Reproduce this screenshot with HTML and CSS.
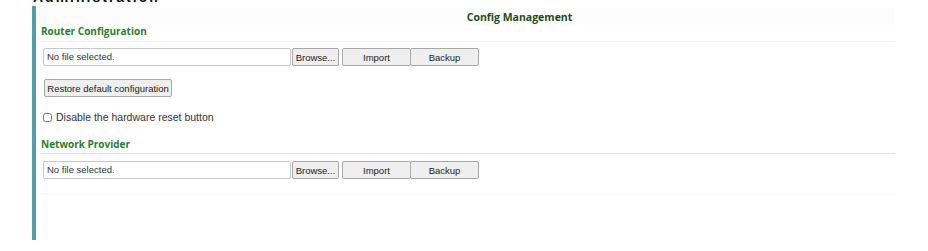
FILE: index.html
```html
<!DOCTYPE html>
<html lang="en">
<head>
  <meta charset="UTF-8">
  <title>Config Management</title>
  <link rel="stylesheet" href="styles.css">
</head>
<body>
  <div class="top-title"><span>Administration</span></div>
  <div class="panel">
    <div class="panel-head">Config Management</div>
    <div class="panel-body">
      <h3 class="section">Router Configuration</h3>
      <div class="file-row">
        <div class="file-box">No file selected.</div>
        <button class="btn browse">Browse...</button>
        <button class="btn action">Import</button>
        <button class="btn action">Backup</button>
      </div>
      <button class="btn restore">Restore default configuration</button>
      <label class="check">
        <input type="checkbox">
        <span>Disable the hardware reset button</span>
      </label>

      <h3 class="section ruled">Network Provider</h3>
      <div class="file-row">
        <div class="file-box">No file selected.</div>
        <button class="btn browse">Browse...</button>
        <button class="btn action">Import</button>
        <button class="btn action">Backup</button>
      </div>
      <div class="dotted"></div>
    </div>
  </div>
</body>
</html>
```
FILE: styles.css
```css
body {
  margin: 0;
  font-family: "Liberation Sans", Arial, sans-serif;
  font-size: 11px;
  color: #222;
  background: #fff;
}

.top-title {
  height: 4px;
  overflow: hidden;
  padding-left: 33px;
}

.top-title span {
  display: block;
  margin-top: -11px;
  font-size: 14px;
  line-height: 16px;
  font-weight: bold;
  color: #111;
  letter-spacing: 2px;
}

.panel {
  margin-left: 32px;
  width: 859px;
  margin-top: 2px;
  padding-top: 2px;
  height: 232px;
  border-left: 4px solid #4f9ea9;
  background: #fff;
}

.panel-head {
  height: 17px;
  line-height: 19px;
  text-align: center;
  font-family: "Open Sans", sans-serif;
  font-weight: bold;
  font-size: 10.5px;
  color: #1e4a22;
  background: #fcfcfc;
  padding-left: 108px;
}

.panel-body {
  padding: 0 0 0 5px;
}

.section {
  margin: 0;
  font-family: "Open Sans", sans-serif;
  font-size: 10px;
  font-weight: bold;
  color: #2e7d2e;
  height: 12px;
  line-height: 12px;
  padding-bottom: 4px;
  border-bottom: 1px solid #f3f3f3;
}

.ruled {
  padding-bottom: 3px;
  border-bottom: 1px solid #e4e4e4;
}

.file-row {
  display: flex;
  margin: 6px 0 0 2px;
  height: 18px;
}

.ruled + .file-row {
  margin-top: 7px;
}

.file-box {
  width: 243px;
  height: 16px;
  line-height: 16px;
  padding-left: 3px;
  border: 1px solid #c8c8c8;
  border-radius: 2px;
  font-size: 9.5px;
  color: #333;
}

.btn {
  font-family: "Liberation Sans", Arial, sans-serif;
  font-size: 9.5px;
  color: #222;
  height: 18px;
  padding: 0;
  background: #efefef;
  border: 1px solid #a8a8a8;
  border-radius: 2px;
}

.browse {
  width: 47px;
  margin-left: 1px;
}

.action {
  width: 69px;
}

.browse + .action {
  margin-left: 3px;
}

.action + .action {
  margin-left: -1px;
}

.restore {
  display: block;
  margin: 13px 0 0 3px;
  width: 128px;
}

.check {
  display: flex;
  align-items: center;
  margin: 13px 0 0 2px;
  height: 14px;
}

.check input {
  margin: 0 4px 0 0;
  width: 9px;
  height: 9px;
}

.check span {
  font-size: 10.5px;
  color: #333;
}

.check + .ruled {
  margin-top: 14px;
}

.dotted {
  margin-top: 14px;
  height: 2px;
  border-top: 1px dotted #f0f0f0;
}
```
